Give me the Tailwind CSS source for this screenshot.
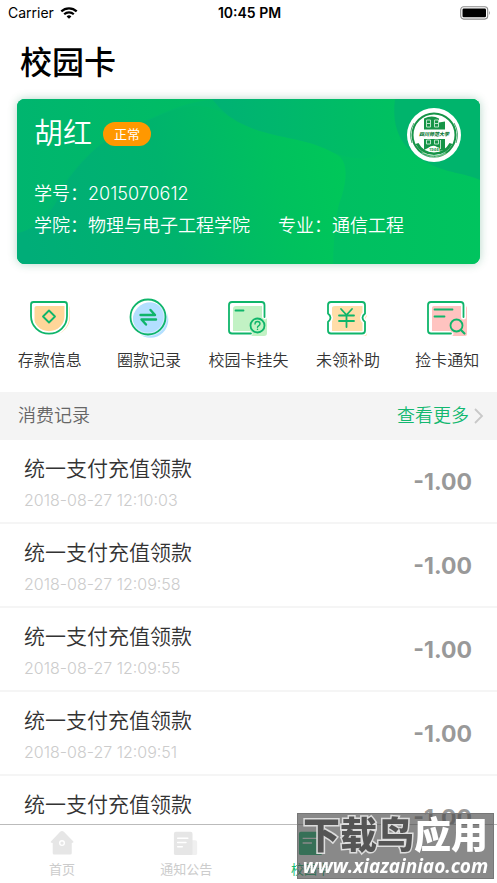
<!DOCTYPE html>
<html lang="zh-CN">
<head>
<meta charset="utf-8">
<meta name="viewport" content="width=device-width, initial-scale=1">
<title>校园卡</title>
<script src="https://cdn.jsdelivr.net/npm/@tailwindcss/browser@4"></script>
</head>
<body class="h-screen overflow-hidden bg-white font-['Inter','Noto_Sans_CJK_SC',sans-serif] text-[#333]">
<!-- Status bar -->
<div class="grid h-[26px] grid-cols-3 items-center pr-[6px] pl-2 text-sm leading-none text-black">
  <div class="flex items-center gap-1.5">
    <span>Carrier</span>
    <svg class="h-3 w-[18px]" viewBox="0 0 18 12" fill="none" stroke="#000" stroke-width="2.2" aria-hidden="true">
      <path d="M1.3 4.4a11.2 11.2 0 0 1 15.4 0M4.2 7.3a7 7 0 0 1 9.6 0"/>
      <path d="M9 11.8 6.6 9.4a3.5 3.5 0 0 1 4.8 0z" fill="#000" stroke="none"/>
    </svg>
  </div>
  <span class="text-center font-semibold">10:45 PM</span>
  <svg class="h-[14px] w-[31px] justify-self-end" viewBox="0 0 31 14" aria-hidden="true">
    <rect x=".7" y=".7" width="27" height="12.4" rx="3" fill="none" stroke="#8a8a8a" stroke-width="1.1"/>
    <rect x="2.5" y="2.5" width="23.5" height="8.8" rx="1.2"/>
    <path d="M29 4.8q1.6 2.1 0 4.2z" fill="#888"/>
  </svg>
</div>

<header class="px-5 pt-[13px]">
  <h1 class="text-[32px] leading-[48px] font-medium text-black">校园卡</h1>
</header>

<main>
  <section class="relative mx-[17px] mt-3 h-[165px] rounded-lg bg-[#00b86a] shadow-[0_0_10px_rgba(0,120,70,0.3)]">
    <svg class="absolute inset-0 h-full w-full rounded-lg" viewBox="0 0 463 165" preserveAspectRatio="none" aria-hidden="true">
      <defs>
        <linearGradient id="base" x1="0" y1="0" x2="1" y2="0"><stop offset="0" stop-color="#00b56f"/><stop offset=".4" stop-color="#00b969"/><stop offset=".75" stop-color="#00c061"/><stop offset="1" stop-color="#00c45e"/></linearGradient>
        <linearGradient id="wave" x1="0" y1=".6" x2="1" y2=".5"><stop offset="0" stop-color="#00ad78"/><stop offset=".45" stop-color="#00b36d"/><stop offset=".8" stop-color="#00c15e"/><stop offset="1" stop-color="#00c759"/></linearGradient>
        <linearGradient id="leaf" x1="0" y1="0" x2="1" y2="0"><stop offset="0" stop-color="#00b56f"/><stop offset="1" stop-color="#00bf60"/></linearGradient>
        <linearGradient id="top" x1="0" y1="0" x2="1" y2="0"><stop offset="0" stop-color="#00b174"/><stop offset="1" stop-color="#00c160"/></linearGradient>
      </defs>
      <path d="M0 0H463V165H0z" fill="url(#base)"/>
      <path d="M0 134C26 130 38 95 52 77C85 34 115 29 146 15C195-5 205 18 235 29C275 38 305 45 322 57C334 67 327 92 322 105Q317 125 316 165H0z" fill="url(#wave)"/>
      <path d="M0 0H198C160 4 138 19 121 24C88 35 64 63 50 82C37 107 30 128 0 134z" fill="url(#leaf)" opacity=".75"/>
      <path d="M195 0H380V28C378 58 349 67 315 53C293 40 257 39 232 28Q210 20 195 0z" fill="url(#top)"/>
      <path d="M378 0C374 32 386 49 407 62C430 75 449 74 463 81V0z" fill="#00b46c"/>
    </svg>
    <div class="relative flex h-full flex-col px-[17px] pt-[13px] text-white">
      <div class="flex items-center gap-[11px]">
        <h2 class="text-[29px] leading-[44px] font-[350]">胡红</h2>
        <span class="rounded-full bg-[#ff9800] px-[11px] text-[13px] leading-6">正常</span>
      </div>
      <dl class="mt-6 grid gap-1 text-lg leading-7 font-[350]">
        <div class="flex"><dt>学号：</dt><dd>2015070612</dd></div>
        <div class="flex"><dt>学院：</dt><dd>物理与电子工程学院</dd><dt class="ml-7">专业：</dt><dd>通信工程</dd></div>
      </dl>
    </div>
    <svg class="absolute top-2 right-[18px] h-[56px] w-[56px]" viewBox="0 0 56 56" role="img" aria-label="四川师范大学">
      <defs><path id="arc" d="M6 34a23 23 0 0 0 44 0"/></defs>
      <circle cx="28" cy="28" r="27" fill="#fff"/>
      <circle cx="28" cy="28" r="21.5" fill="none" stroke="#169447" stroke-width="2"/>
      <path d="M9.5 37a21 21 0 0 0 37 0l-3-1a17.5 17.5 0 0 1-31 0z" fill="#169447"/>
      <path d="M8 16a23.500 23.500 0 0 0-2 20M48 16a23.500 23.500 0 0 1 2 20" fill="none" stroke="#169447" stroke-width=".8"/>
      <path d="M18 11.500q8-4 15 0v4l6-1v8H18zM18 32h21v11l-6 1-2-4q-4-3-9 1l-4 2z" fill="#169447"/>
      <g stroke="#b9e2c7" stroke-width="1" fill="none"><path d="M20.500 13h4v7h-4zM28.500 13h4v7h-4zM20.500 16.500h4M28.500 16.500h4M20.500 33h4v4h-4zM28.500 33h4v4h-4zM34.500 33v9"/></g>
      <path d="M12 23h32v8H12z" fill="#fff"/>
      <text x="28" y="29" text-anchor="middle" font-size="5" font-weight="900" font-style="italic" fill="#107b38" font-family="Noto Sans CJK SC">四川师范大学</text>
      <text x="28" y="43.500" text-anchor="middle" font-size="4" font-weight="700" fill="#169447" font-family="Inter" stroke="#fff" stroke-width="1.500" paint-order="stroke">1946</text>
      <text font-size="3" fill="#d6f0df" font-family="Inter"><textPath href="#arc" startOffset="50%" text-anchor="middle">SICHUAN NORMAL</textPath></text>
    </svg>
  </section>

  <nav class="mt-[33px] grid grid-cols-5 text-base leading-6 font-[350]" aria-label="校园卡服务">
    <a href="#" class="flex flex-col items-center gap-[7px] whitespace-nowrap">
      <svg class="size-11" viewBox="0 0 44 44" fill="none" stroke="#0fb56a" stroke-width="1.800" stroke-linejoin="round" aria-hidden="true">
        <path d="M6.500 11q0-2 2-2H40q2 0 2 2v10a18 18 0 0 1-35.500 3z" fill="#ffd699" stroke="none"/>
        <path d="M5.500 5h31Q39 5 39 7.500V19c0 10-8 17.700-18 17.700S3 29 3 19V7.500Q3 5 5.500 5z" stroke="#fff" stroke-width="5"/>
        <path d="M5.500 5h31Q39 5 39 7.500V19c0 10-8 17.700-18 17.700S3 29 3 19V7.500Q3 5 5.500 5zM21 13.500l6 6-6 6-6-6z"/>
      </svg>存款信息</a>
    <a href="#" class="flex flex-col items-center gap-[7px] whitespace-nowrap">
      <svg class="size-11" viewBox="0 0 44 44" fill="none" stroke="#0fb56a" aria-hidden="true">
        <circle cx="23.500" cy="23" r="17.800" fill="#b3dfff" stroke="none"/>
        <circle cx="21" cy="20" r="17.500" stroke="#fff" stroke-width="4"/>
        <circle cx="23.500" cy="23" r="17" fill="#b3dfff" stroke="none" opacity=".6"/>
        <circle cx="21" cy="20" r="17.500" stroke-width="1.800"/>
        <path d="M13.500 18h14.500L23.500 13M29 22.500H14.500l4.500 5" stroke-width="2.400" stroke-linecap="round" stroke-linejoin="round"/>
      </svg>圈款记录</a>
    <a href="#" class="flex flex-col items-center gap-[7px] whitespace-nowrap">
      <svg class="size-11" viewBox="0 0 44 44" fill="none" stroke="#0fb56a" stroke-width="1.800" stroke-linecap="round" aria-hidden="true">
        <rect x="7" y="9" width="34" height="30" rx="3" fill="#c2f2c4" stroke="none"/>
        <path d="M38.500 20V8q0-3-3-3H6Q3 5 3 8v25.500q0 3 3 3h18" stroke="#fff" stroke-width="5"/>
        <path d="M38.500 20V8q0-3-3-3H6Q3 5 3 8v25.500q0 3 3 3h19M9.500 13.500h8"/>
        <circle cx="31.500" cy="28.500" r="9.300" fill="#c2f2c4" stroke="none"/><circle cx="31.500" cy="28.500" r="7"/>
        <path d="M29 27q0-2.500 2.500-2.500t2.500 2.300q0 1.200-1.400 2-1.100.6-1.100 1.500M31.500 32.300v.1" stroke-width="1.400"/>
      </svg>校园卡挂失</a>
    <a href="#" class="flex flex-col items-center gap-[7px] whitespace-nowrap">
      <svg class="size-11" viewBox="0 0 44 44" fill="none" stroke="#0fb56a" stroke-width="1.800" stroke-linecap="round" stroke-linejoin="round" aria-hidden="true">
        <path d="M9 9h30q2 0 2 2v8q-4 4.500 0 9v9q0 2-2 2H8q-2 0-2-2V11q0-2 3-2z" fill="#ffdda8" stroke="none"/>
        <path d="M5 5h31q3 0 3 3v8.500q-5 4 0 8.500v8.500q0 3-3 3H5q-3 0-3-3V25q5-4.500 0-8.500V8q0-3 3-3z" stroke="#fff" stroke-width="5"/>
        <path d="M5 5h31q3 0 3 3v8.500q-5 4 0 8.500v8.500q0 3-3 3H5q-3 0-3-3V25q5-4.500 0-8.500V8q0-3 3-3zM15 12l5.500 6 5.500-6M13 18.500h15M13 24h15M20.500 18.500V30"/>
      </svg>未领补助</a>
    <a href="#" class="flex flex-col items-center gap-[7px] whitespace-nowrap">
      <svg class="size-11" viewBox="0 0 44 44" fill="none" stroke="#0fb56a" stroke-width="1.800" stroke-linecap="round" aria-hidden="true">
        <rect x="7" y="9" width="35" height="30" rx="2" fill="#ffc3c0" stroke="none"/>
        <path d="M38.500 20V8q0-3-3-3H6Q3 5 3 8v25.500q0 3 3 3h20" stroke="#fff" stroke-width="5"/>
        <path d="M38.500 20V8q0-3-3-3H6Q3 5 3 8v25.500q0 3 3 3h20M9.500 12.500h18M9.500 19.500h10"/>
        <circle cx="31.500" cy="28.500" r="8" fill="#ffc3c0" stroke="none"/><circle cx="31.500" cy="28.500" r="6"/><path d="m36 33 3.500 3.500" stroke-width="2.200"/>
      </svg>捡卡通知</a>
  </nav>

  <section class="mt-5">
    <div class="flex h-12 items-center justify-between bg-[#f4f4f4] pr-3 pl-[18px] text-lg font-[350]">
      <h2 class="text-[#666]">消费记录</h2>
      <a href="#" class="flex items-center gap-1 text-[#12b870]">查看更多
        <svg class="h-4 w-3" viewBox="0 0 12 16" fill="none" stroke="#c8c8c8" stroke-width="1.800" aria-hidden="true"><path d="m2 1 7 7-7 7"/></svg>
      </a>
    </div>
    <ul>
      <li class="flex h-[84px] items-center justify-between border-b-2 border-[#f5f5f5] pr-[25px] pl-6">
        <div class="pt-1.5"><p class="text-[21px] leading-8 font-[350]">统一支付充值领款</p><time class="block text-base leading-[30px] font-[350] text-[#ccc]">2018-08-27 12:10:03</time></div>
        <span class="pt-0.5 text-[23px] font-bold text-[#999]">-1.00</span>
      </li>
      <li class="flex h-[84px] items-center justify-between border-b-2 border-[#f5f5f5] pr-[25px] pl-6">
        <div class="pt-1.5"><p class="text-[21px] leading-8 font-[350]">统一支付充值领款</p><time class="block text-base leading-[30px] font-[350] text-[#ccc]">2018-08-27 12:09:58</time></div>
        <span class="pt-0.5 text-[23px] font-bold text-[#999]">-1.00</span>
      </li>
      <li class="flex h-[84px] items-center justify-between border-b-2 border-[#f5f5f5] pr-[25px] pl-6">
        <div class="pt-1.5"><p class="text-[21px] leading-8 font-[350]">统一支付充值领款</p><time class="block text-base leading-[30px] font-[350] text-[#ccc]">2018-08-27 12:09:55</time></div>
        <span class="pt-0.5 text-[23px] font-bold text-[#999]">-1.00</span>
      </li>
      <li class="flex h-[84px] items-center justify-between border-b-2 border-[#f5f5f5] pr-[25px] pl-6">
        <div class="pt-1.5"><p class="text-[21px] leading-8 font-[350]">统一支付充值领款</p><time class="block text-base leading-[30px] font-[350] text-[#ccc]">2018-08-27 12:09:51</time></div>
        <span class="pt-0.5 text-[23px] font-bold text-[#999]">-1.00</span>
      </li>
      <li class="flex h-[84px] items-center justify-between pr-[25px] pl-6">
        <div class="pb-[26px]"><p class="text-[21px] leading-8 font-[350]">统一支付充值领款</p></div>
        <span class="text-[23px] font-bold text-[#999]">-1.00</span>
      </li>
    </ul>
  </section>
</main>

<!-- Tab bar -->
<nav class="fixed inset-x-0 bottom-0 grid h-[59px] grid-cols-4 border-t border-[#bbb] bg-white pt-[5px] text-[13px] leading-5 text-[#ccc]" aria-label="主导航">
  <a href="#" class="flex flex-col items-center gap-[3px]">
    <svg class="size-[26px]" viewBox="0 0 28 28" aria-hidden="true"><path d="M14 1q1 0 2 1l10 10q.8.8 0 1.500-.5.500-1.500.5v11q0 1.500-1.500 1.500H5.500Q4 26.500 4 25V14Q2.500 14 2 13.500q-.5-.8.300-1.500L12 2q1-1 2-1z" fill="#e6e6e6"/><circle cx="14" cy="14" r="2.500" fill="none" stroke="#fff" stroke-width="1.500"/></svg>首页</a>
  <a href="#" class="flex flex-col items-center gap-[3px]">
    <svg class="size-[26px]" viewBox="0 0 28 28" aria-hidden="true"><rect x="15" y="11" width="11" height="16" rx="2" fill="#f0f0f0"/><rect x="1" y="2" width="20" height="25" rx="2" fill="#e6e6e6"/><path d="M5 9h11M5 13.500h9M5 18h5" stroke="#fff" stroke-width="1.600" stroke-linecap="round"/></svg>通知公告</a>
  <a href="#" class="flex flex-col items-center gap-[3px] text-[#12b870]" aria-current="page">
    <svg class="size-[26px]" viewBox="0 0 28 28" aria-hidden="true"><rect x="1" y="2" width="25" height="25" rx="2" fill="#12b870"/><path d="M5 9h16M5 14h10" stroke="#fff" stroke-width="1.500"/></svg>校园卡</a>
</nav>

<!-- Watermark -->
<div class="fixed right-[3px] bottom-1 flex h-[66px] w-[197px] flex-col items-center justify-center border border-[#777] bg-[#4a4a4a]/65 whitespace-nowrap text-white">
  <p class="pt-1 text-[37px] leading-9 font-black"><span class="text-[#555] [-webkit-text-stroke:3px_#ddd] [paint-order:stroke_fill]">下载鸟</span>应用</p>
  <p class="font-['Open_Sans'] text-[19px] leading-6 font-bold italic">www.xiazainiao.com</p>
</div>
</body>
</html>
